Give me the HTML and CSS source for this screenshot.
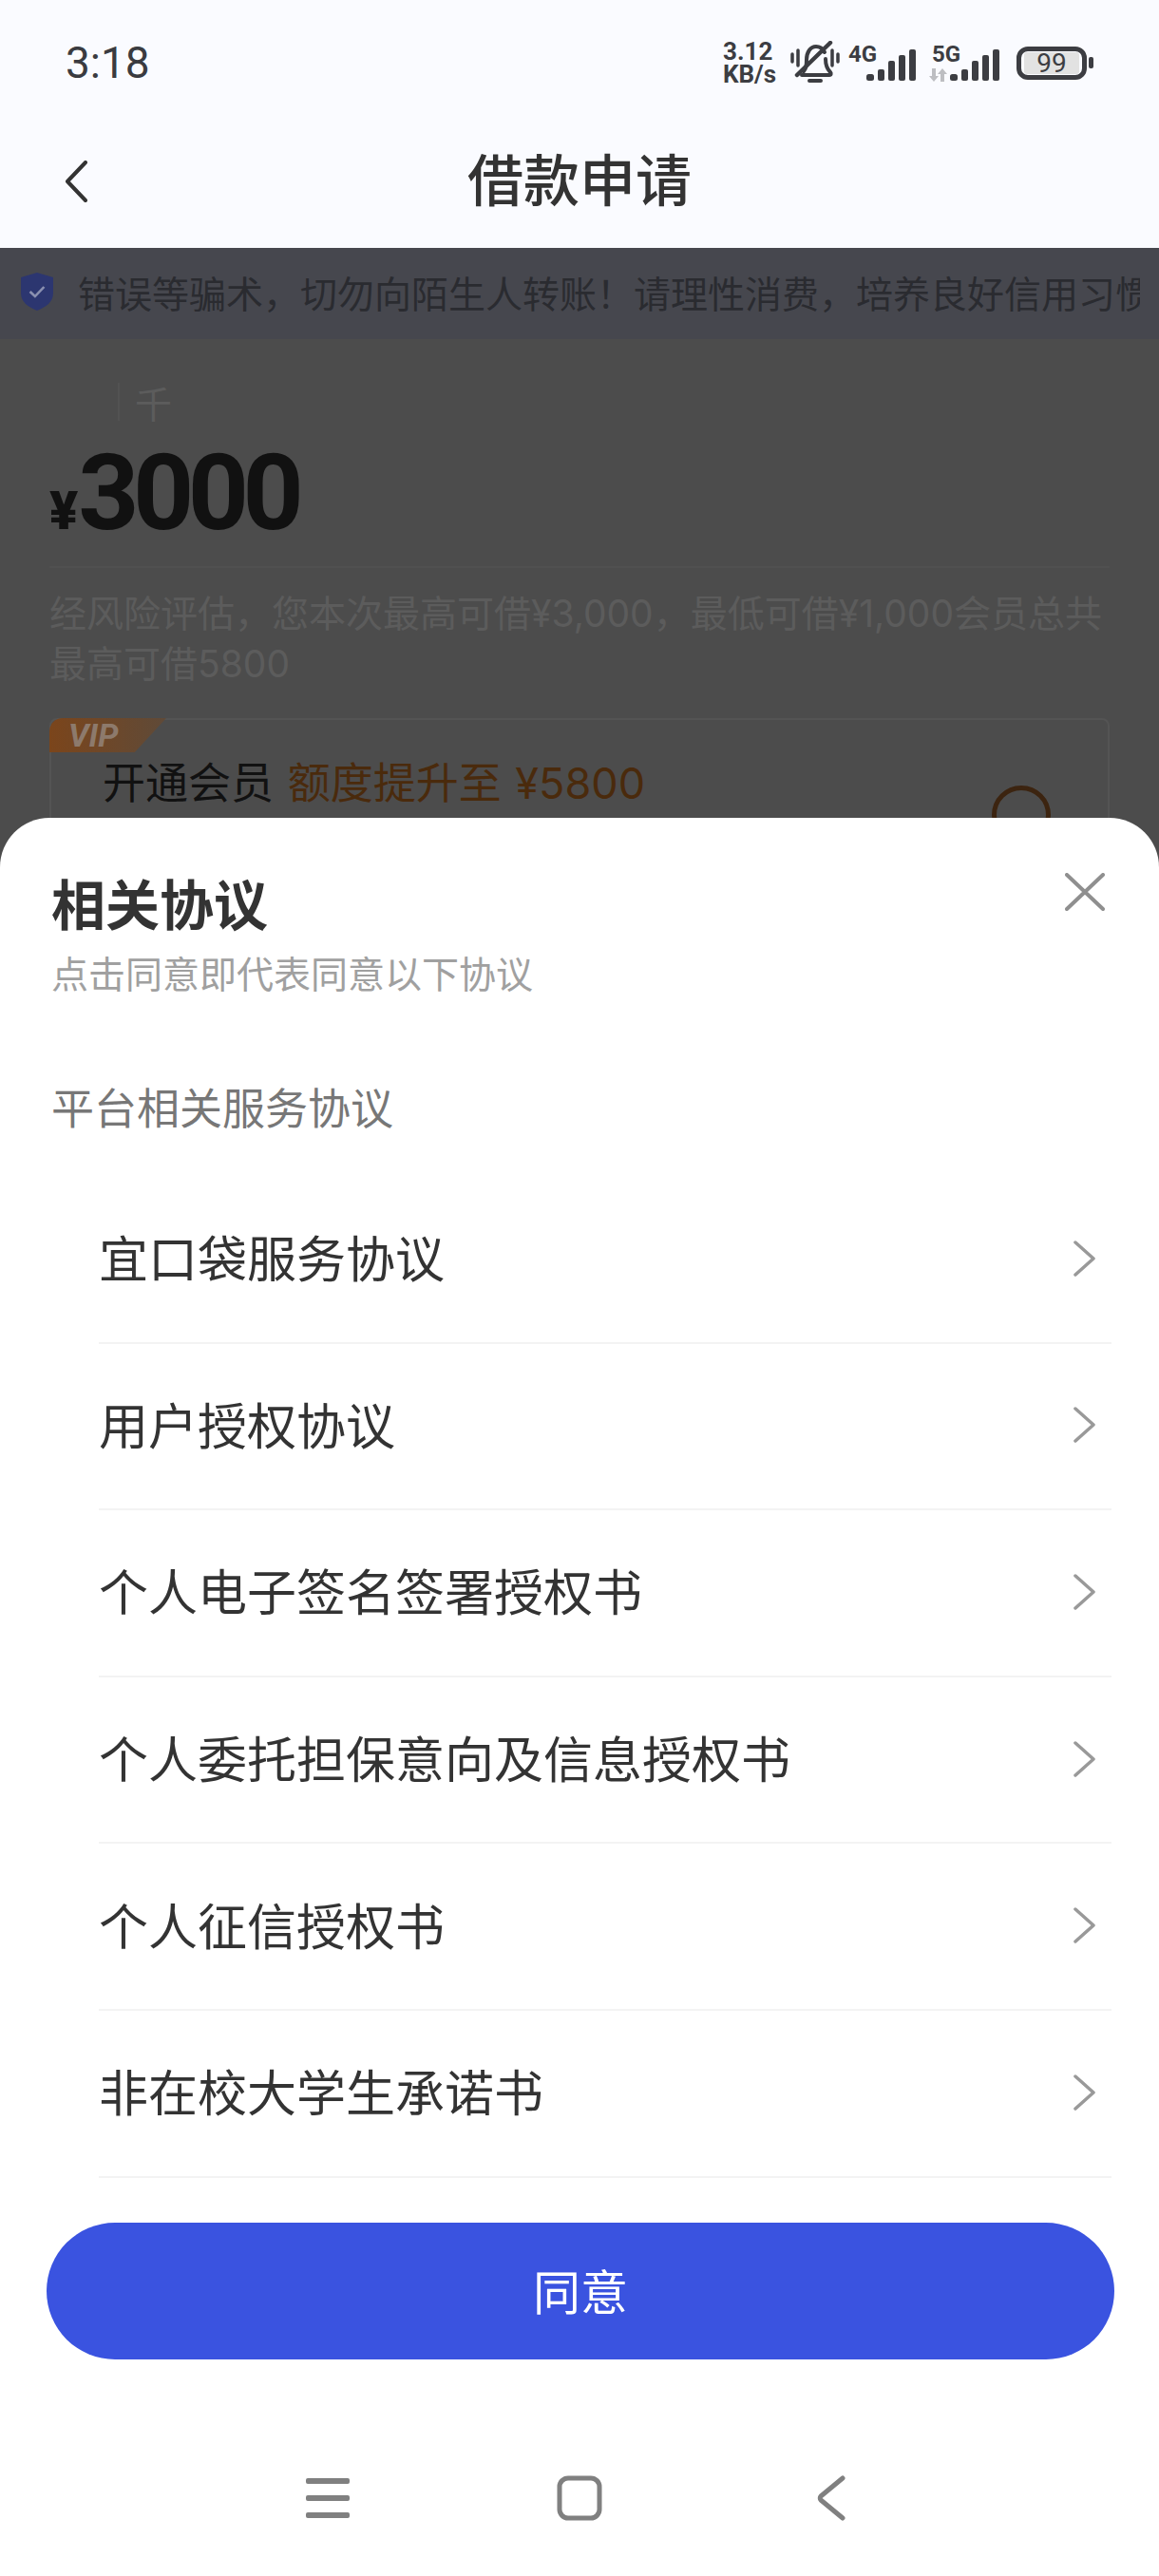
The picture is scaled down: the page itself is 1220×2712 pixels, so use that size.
FILE: index.html
```html
<!DOCTYPE html>
<html lang="zh-CN">
<head>
    <meta charset="UTF-8">
    <meta name="viewport" content="width=device-width, initial-scale=1.0">
    <title>借款申请</title>
    <link rel="stylesheet" href="styles.css">
</head>
<body>
    <div id="page">
        <div class="top">
            <div class="status">
                <span class="time">3:18</span>
                <div class="status-icons">
                    <span class="speed">3.12<br>KB/s</span>
                    <svg class="bell" width="52" height="46" viewBox="0 0 52 46" fill="none" stroke="#3c3d42">
                        <path d="M14 32c3-3 3-7 3-12 0-8 4-14 10-14 4 0 7 2 9 6M37 19c0 6 1 10 5 14 1 1 1 3-1 3H12" stroke-width="4" stroke-linecap="round"/>
                        <path d="M7 36 42 2" stroke-width="4.5" stroke-linecap="round"/>
                        <path d="M20 42h12" stroke-width="4" stroke-linecap="round"/>
                        <path d="M2 14v8M8 10v16M44 10v16M50 14v8" stroke-width="3.5" stroke-linecap="round"/>
                    </svg>
                    <svg class="signal signal-first" width="72" height="46" viewBox="0 -6 72 46" fill="#3c3d42">
                        <text x="0" y="19" class="net">4G</text>
                        <rect x="19" y="32" width="8" height="7" rx="2.5"/>
                        <rect x="31" y="27" width="7" height="12" rx="2"/>
                        <rect x="42" y="18" width="7" height="21" rx="2"/>
                        <rect x="53" y="12" width="7" height="27" rx="2"/>
                        <rect x="64" y="6" width="7" height="33" rx="2"/>
                    </svg>
                    <svg class="signal" width="75" height="46" viewBox="0 -6 75 46" fill="#3c3d42">
                        <text x="3" y="19" class="net">5G</text>
                        <path d="M3 26h4v8h3l-5 6-5-6h3zM12 40h4v-8h3l-5-6-5 6h3z" fill="#bdbec2"/>
                        <rect x="22" y="32" width="8" height="7" rx="2.5"/>
                        <rect x="34" y="27" width="7" height="12" rx="2"/>
                        <rect x="45" y="18" width="7" height="21" rx="2"/>
                        <rect x="56" y="12" width="7" height="27" rx="2"/>
                        <rect x="67" y="6" width="7" height="33" rx="2"/>
                    </svg>
                    <div class="battery"><span class="level">99</span></div>
                    <div class="nub"></div>
                </div>
            </div>
            <div class="nav">
                <svg width="24" height="44" viewBox="0 0 24 44" fill="none" stroke="#333" stroke-width="4" stroke-linecap="round" stroke-linejoin="round">
                    <path d="M22 2 3 22l19 20"/>
                </svg>
                <h1 class="nav-title">借款申请</h1>
            </div>
        </div>

        <div class="notice">
            <svg width="36" height="42" viewBox="0 0 34 42" preserveAspectRatio="none">
                <path d="M17 1 33 6v17c0 9-7 14-16 18C8 37 1 32 1 23V6z" fill="#2c3670"/>
                <path d="M10 21l5 5 9-10" fill="none" stroke="#8a90b0" stroke-width="2.5"/>
            </svg>
            <div class="notice-text">错误等骗术，切勿向陌生人转账！请理性消费，培养良好信用习惯</div>
        </div>

        <div class="loan">
            <div class="unit"><span class="unit-line"></span>千</div>
            <div class="amount"><span class="yen">¥</span>3000</div>
            <p class="desc">经风险评估，您本次最高可借¥3,000，最低可借¥1,000会员总共<br>最高可借5800</p>
            <div class="vip">
                <div class="vip-tag">VIP</div>
                <div class="vip-row">
                    <div class="vip-text">开通会员 <span class="vip-gold">额度提升至 ¥5800</span></div>
                    <div class="vip-check"></div>
                </div>
            </div>
        </div>

        <!-- 协议弹层 -->
        <div class="sheet">
            <div class="sheet-head">
                <div>
                    <h2 class="sheet-title">相关协议</h2>
                    <p class="sheet-sub">点击同意即代表同意以下协议</p>
                </div>
                <svg class="close" width="42" height="40" viewBox="0 0 42 40" fill="none" stroke="#8f8f8f" stroke-width="4" stroke-linecap="round">
                    <path d="M2 2l38 36M40 2 2 38"/>
                </svg>
            </div>
            <div class="group-name">平台相关服务协议</div>
            <ul class="list">
                <li>宜口袋服务协议<svg width="24" height="38" viewBox="0 0 24 38" fill="none" stroke="#999" stroke-width="3.5" stroke-linecap="round" stroke-linejoin="round"><path d="M2 2l19 17L2 36"/></svg></li>
                <li>用户授权协议<svg width="24" height="38" viewBox="0 0 24 38" fill="none" stroke="#999" stroke-width="3.5" stroke-linecap="round" stroke-linejoin="round"><path d="M2 2l19 17L2 36"/></svg></li>
                <li>个人电子签名签署授权书<svg width="24" height="38" viewBox="0 0 24 38" fill="none" stroke="#999" stroke-width="3.5" stroke-linecap="round" stroke-linejoin="round"><path d="M2 2l19 17L2 36"/></svg></li>
                <li>个人委托担保意向及信息授权书<svg width="24" height="38" viewBox="0 0 24 38" fill="none" stroke="#999" stroke-width="3.5" stroke-linecap="round" stroke-linejoin="round"><path d="M2 2l19 17L2 36"/></svg></li>
                <li>个人征信授权书<svg width="24" height="38" viewBox="0 0 24 38" fill="none" stroke="#999" stroke-width="3.5" stroke-linecap="round" stroke-linejoin="round"><path d="M2 2l19 17L2 36"/></svg></li>
                <li>非在校大学生承诺书<svg width="24" height="38" viewBox="0 0 24 38" fill="none" stroke="#999" stroke-width="3.5" stroke-linecap="round" stroke-linejoin="round"><path d="M2 2l19 17L2 36"/></svg></li>
            </ul>
            <div class="agree">同意</div>
            <div class="sys-nav">
                <svg width="48" height="48" viewBox="0 0 48 48" fill="#808080">
                    <rect x="1" y="3" width="46" height="6" rx="2"/>
                    <rect x="1" y="21" width="46" height="6" rx="2"/>
                    <rect x="1" y="39" width="46" height="6" rx="2"/>
                </svg>
                <svg width="48" height="48" viewBox="0 0 48 48" fill="none" stroke="#808080" stroke-width="5">
                    <rect x="3" y="3" width="42" height="42" rx="9"/>
                </svg>
                <svg width="48" height="48" viewBox="0 0 48 48" fill="none" stroke="#808080" stroke-width="5" stroke-linecap="round" stroke-linejoin="round">
                    <path d="M36 3 13 22c-1 1-1 3 0 4l23 19"/>
                </svg>
            </div>
        </div>
    </div>
</body>
</html>
```

FILE: styles.css
```css
*{
    margin: 0;
    padding: 0;
    box-sizing: border-box;
}
ul{
    list-style: none;
}
body{
    font-family: "Noto Sans CJK SC", Roboto, sans-serif;
    background: #4c4c4c;
}
#page{
    width: 1220px;
    height: 2712px;
    position: relative;
    overflow: hidden;
    background: #4c4c4c;
}

/* 顶部 */
.top{
    height: 261px;
    background: #fafbff;
}
.status{
    height: 130px;
    padding: 2px 69px 0 69px;
    display: flex;
    justify-content: space-between;
    align-items: center;
}
.time{
    font-family: Roboto, sans-serif;
    font-size: 46px;
    color: #3a3b40;
}
.status-icons{
    display: flex;
    align-items: center;
}
.speed{
    font-family: Roboto, sans-serif;
    font-weight: 700;
    font-size: 26px;
    line-height: 24px;
    color: #3c3d42;
    width: 71px;
}
.bell{
    margin-right: 9px;
}
.signal{
    margin-right: 16px;
    margin-bottom: 6px;
}
.signal-first{
    margin-right: 13px;
}
.net{
    font-family: Roboto, sans-serif;
    font-weight: 700;
    font-size: 24px;
}
.battery{
    width: 74px;
    height: 35px;
    border: 5px solid #3c3d42;
    border-radius: 12px;
    padding: 1px 3px;
    margin-left: 1px;
}
.level{
    display: block;
    height: 100%;
    background: #e2e2e2;
    border-radius: 3px;
    font-family: Roboto, sans-serif;
    font-size: 28px;
    line-height: 23px;
    text-align: center;
    color: #3c3d42;
}
.nub{
    width: 5px;
    height: 12px;
    margin-left: 2px;
    background: #3c3d42;
    border-radius: 2px;
}
.nav{
    height: 131px;
    padding: 0 68px 10px;
    display: grid;
    grid-template-columns: 1fr auto 1fr;
    align-items: center;
}
.nav-title{
    font-size: 59px;
    font-weight: 500;
    line-height: 112px;
    margin-bottom: 8px;
    color: #333;
}

/* 提示条 */
.notice{
    height: 96px;
    background: #46474e;
    padding: 0 0 4px 21px;
    display: flex;
    align-items: center;
}
.notice-text{
    width: 1118px;
    margin-left: 25px;
    white-space: nowrap;
    overflow: hidden;
    font-size: 39px;
    color: #2a2b30;
}

/* 额度 */
.loan{
    padding: 46px 52px 0;
}
.unit{
    display: flex;
    align-items: center;
    padding-left: 72px;
    height: 40px;
    font-size: 39px;
    color: #5c5c5c;
}
.unit-line{
    width: 2px;
    height: 40px;
    background: #525252;
    margin-right: 16px;
}
.amount{
    margin-top: 20px;
    height: 135px;
    border-bottom: 2px solid #505050;
    font-family: Roboto, sans-serif;
    font-weight: 700;
    font-size: 112px;
    line-height: 112px;
    letter-spacing: -6.5px;
    color: #111;
}
.yen{
    font-size: 56px;
    font-weight: 900;
    letter-spacing: 0;
}
.desc{
    margin-top: 21px;
    font-family: Inter, "Noto Sans CJK SC", sans-serif;
    font-size: 39px;
    line-height: 53px;
    white-space: nowrap;
    color: #5c5c5c;
}
.vip{
    margin-top: 31px;
    width: 1116px;
    height: 200px;
    border: 2px solid #545454;
    border-radius: 8px;
}
.vip-tag{
    margin: -2px 0 0 -2px;
    width: 123px;
    height: 36px;
    padding-left: 20px;
    background: linear-gradient(90deg, #7b451b, #5f4a38);
    clip-path: polygon(0 0, 100% 0, 73% 100%, 0 100%);
    border-radius: 14px 0 0 0;
    font-family: Roboto, sans-serif;
    font-style: italic;
    font-weight: 700;
    font-size: 34px;
    line-height: 36px;
    color: #8d7a6c;
}
.vip-row{
    display: flex;
    justify-content: space-between;
    padding: 0 60px 0 54px;
}
.vip-text{
    font-family: Inter, "Noto Sans CJK SC", sans-serif;
    font-size: 45px;
    line-height: 66px;
    word-spacing: 2px;
    color: #111;
}
.vip-gold{
    color: #4a2a0c;
}
.vip-check{
    width: 62px;
    height: 62px;
    margin-top: 35px;
    border: 5px solid #3c2410;
    border-radius: 50%;
}

/* 弹层 */
.sheet{
    position: absolute;
    left: 0;
    right: 0;
    top: 861px;
    bottom: 0;
    background: #fff;
    border-radius: 52px 52px 0 0;
}
.sheet-head{
    display: flex;
    justify-content: space-between;
    padding: 51px 57px 0 54px;
}
.sheet-title{
    font-size: 57px;
    font-weight: 700;
    line-height: 74px;
    color: #333;
}
.sheet-sub{
    margin-top: 11px;
    font-size: 39px;
    line-height: 52px;
    color: #a0a0a0;
}
.close{
    margin-top: 7px;
}
.group-name{
    margin-top: 84px;
    padding-left: 54px;
    font-size: 45px;
    line-height: 64px;
    color: #777;
}
.list{
    margin-top: 42px;
    padding: 0 50px 0 104px;
}
.list li{
    height: 175.6px;
    border-bottom: 2px solid #f3f3f3;
    display: flex;
    justify-content: space-between;
    align-items: center;
    padding: 0 16px 6px 0;
    font-size: 52px;
    color: #333;
}
.list svg{
    margin-top: 4px;
}
.agree{
    margin: 47px 47px 0 49px;
    height: 144px;
    border-radius: 72px;
    background: #3a53e0;
    color: #fff;
    font-size: 50px;
    line-height: 141px;
    text-align: center;
}
.sys-nav{
    margin-top: 122px;
    display: flex;
    justify-content: center;
    align-items: center;
    gap: 217px;
}
```
